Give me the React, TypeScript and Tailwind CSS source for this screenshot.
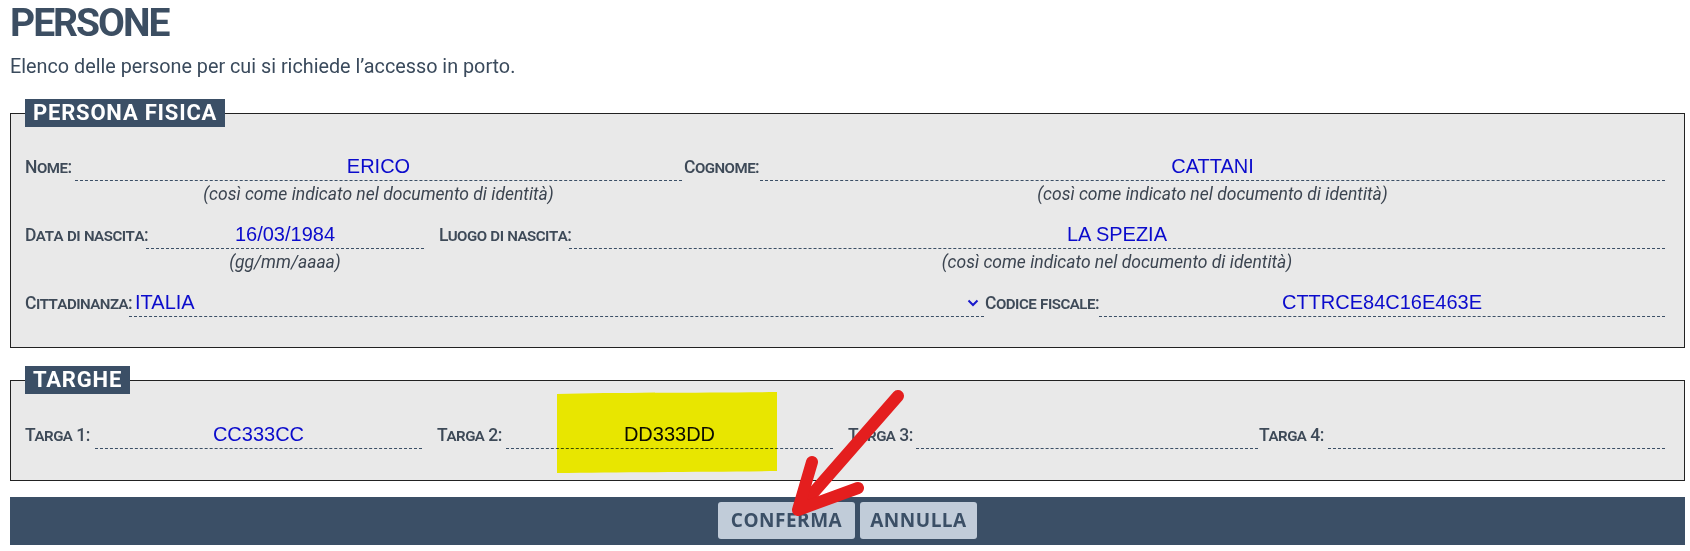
import type { ReactNode } from "react";

const roboto = "[font-family:Roboto,sans-serif]";

function Label({ children, className = "" }: { children: ReactNode; className?: string }) {
  return (
    <div
      className={`shrink-0 whitespace-nowrap text-[17.5px] font-medium leading-[22px] tracking-[-0.5px] text-[#3e4a58] ${roboto} [font-variant:small-caps] ${className}`}
    >
      {children}
    </div>
  );
}

function Field({
  value,
  hint,
  className = "",
}: {
  value?: string;
  hint?: string;
  className?: string;
}) {
  return (
    <div className={`flex flex-col ${className}`}>
      <div className="h-[26px] border-b border-dashed border-[#3b4f66] text-center text-[20px] leading-[22px] text-[#0b0bcc] [font-family:'Liberation_Sans',Arial,sans-serif]">
        {value || "\u00a0"}
      </div>
      {hint && (
        <div className={`mt-[4px] text-center text-[17.5px] italic leading-[18px] text-[#3b4450] ${roboto}`}>
          {hint}
        </div>
      )}
    </div>
  );
}

function Legend({ children }: { children: ReactNode }) {
  return (
    <legend
      className={`bg-[#3b4f66] px-[8px] text-[22px] font-bold leading-[28px] tracking-[0.8px] text-white ${roboto}`}
    >
      {children}
    </legend>
  );
}

const doc = "(così come indicato nel documento di identità)";

export default function App() {
  return (
    <div className="relative h-[551px] w-[1690px] overflow-hidden bg-white">
      <div className="ml-[10px] w-[1675px]">
        <h1 className={`text-[39px] font-bold leading-[46px] tracking-[-2px] text-[#3c4e62] ${roboto}`}>
          PERSONE
        </h1>
        <p className={`mt-[9px] text-[19.8px] leading-[24px] text-[#3a4a5c] ${roboto}`}>
          Elenco delle persone per cui si richiede l’accesso in porto.
        </p>

        <fieldset className="mt-[20px] border border-[#222] bg-[#e9e9e9] pb-[30px] pl-[14px] pr-[19px] pt-[28px]">
          <Legend>PERSONA FISICA</Legend>

          <div className="flex items-baseline">
            <Label className="w-[50px]">Nome:</Label>
            <Field className="w-[607px]" value="ERICO" hint={doc} />
            <Label className="w-[78px] pl-[2px]">Cognome:</Label>
            <Field className="flex-1" value="CATTANI" hint={doc} />
          </div>

          <div className="mt-[20px] flex items-baseline">
            <Label className="w-[121px]">Data di nascita:</Label>
            <Field className="w-[278px]" value="16/03/1984" hint="(gg/mm/aaaa)" />
            <Label className="w-[145px] pl-[15px]">Luogo di nascita:</Label>
            <Field className="flex-1" value="LA SPEZIA" hint={doc} />
          </div>

          <div className="mt-[20px] flex items-baseline">
            <Label className="w-[104px]">Cittadinanza:</Label>
            <div className="flex h-[26px] w-[855px] items-start justify-between border-b border-dashed border-[#3b4f66] pl-[6px] pr-[5px]">
              <span className="text-[20px] leading-[22px] text-[#0b0bcc] [font-family:'Liberation_Sans',Arial,sans-serif]">
                ITALIA
              </span>
              <svg width="12" height="8" viewBox="0 0 12 8" className="mt-[8px]">
                <path d="M1.5 1.5 L6 6 L10.5 1.5" fill="none" stroke="#1a1acc" strokeWidth="2" />
              </svg>
            </div>
            <Label className="w-[115px] pl-[1px]">Codice fiscale:</Label>
            <Field className="flex-1" value="CTTRCE84C16E463E" />
          </div>
        </fieldset>

        <fieldset className="mt-[18px] border border-[#222] bg-[#e9e9e9] pb-[31px] pl-[14px] pr-[19px] pt-[29px]">
          <Legend>TARGHE</Legend>
          <div className="flex items-baseline">
            <Label className="w-[70px]">Targa 1:</Label>
            <Field className="w-[327px]" value="CC333CC" />
            <Label className="w-[84px] pl-[15px]">Targa 2:</Label>
            <Field className="w-[327px]" value="DD333DD" />
            <Label className="w-[83px] pl-[15px]">Targa 3:</Label>
            <Field className="w-[342px]" />
            <Label className="w-[70px] pl-[1px]">Targa 4:</Label>
            <Field className="flex-1" />
          </div>
        </fieldset>

        <div className="mt-[16px] flex h-[48px] justify-center gap-[5px] bg-[#3b4f66] pt-[5px]">
          <button className="h-[37px] w-[137px] rounded-[3px] bg-[#c1ccd9] text-[19px] font-bold tracking-[0.5px] text-[#3b4f66] [font-family:'Open_Sans',sans-serif]">
            CONFERMA
          </button>
          <button className="h-[37px] w-[117px] rounded-[3px] bg-[#c1ccd9] text-[19px] font-bold tracking-[0.5px] text-[#3b4f66] [font-family:'Open_Sans',sans-serif]">
            ANNULLA
          </button>
        </div>
      </div>

      {/* annotations drawn over the screenshot */}
      <svg
        className="pointer-events-none absolute left-0 top-0 mix-blend-multiply"
        width="1690"
        height="551"
        viewBox="0 0 1690 551"
      >
        <path
          d="M557 394 C620 392 700 393 777 392 L777 471 C700 472 620 472 557 473 Z"
          fill="#fefc00"
        />
      </svg>
      <svg
        className="pointer-events-none absolute left-0 top-0"
        width="1690"
        height="551"
        viewBox="0 0 1690 551"
      >
        <g fill="none" stroke="#e41e1e" strokeWidth="12" strokeLinecap="round" strokeLinejoin="round">
          <path d="M898 396 L800 508" />
          <path d="M812 462 L798 510 L858 488" />
        </g>
      </svg>
    </div>
  );
}
